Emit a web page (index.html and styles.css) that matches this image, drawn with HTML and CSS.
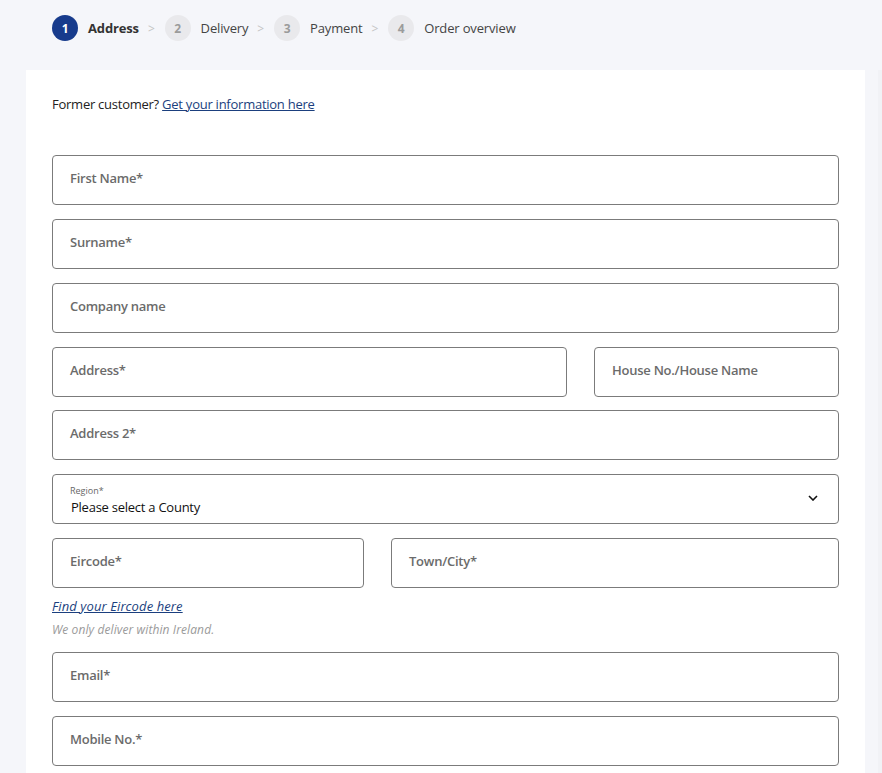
FILE: index.html
```html
<!DOCTYPE html>
<html lang="en">
<head>
    <meta charset="UTF-8">
    <meta name="viewport" content="width=device-width, initial-scale=1.0">
    <title>Checkout - Address</title>
    <link rel="stylesheet" href="styles.css">
</head>
<body>
    <nav class="steps">
        <div class="step active"><span class="num">1</span><span class="label">Address</span></div>
        <span class="sep">&gt;</span>
        <div class="step"><span class="num">2</span><span class="label">Delivery</span></div>
        <span class="sep">&gt;</span>
        <div class="step"><span class="num">3</span><span class="label">Payment</span></div>
        <span class="sep">&gt;</span>
        <div class="step"><span class="num">4</span><span class="label">Order overview</span></div>
    </nav>

    <div class="layout">
        <main class="card">
            <p class="former">Former customer? <a href="#">Get your information here</a></p>

            <form class="fields">
                <div class="field">First Name*</div>
                <div class="field">Surname*</div>
                <div class="field">Company name</div>
                <div class="row row-address">
                    <div class="field">Address*</div>
                    <div class="field">House No./House Name</div>
                </div>
                <div class="field">Address 2*</div>
                <div class="field select">
                    <div class="select-text">
                        <span class="small-label">Region*</span>
                        <span class="value">Please select a County</span>
                    </div>
                    <svg class="chevron" width="10" height="6" viewBox="0 0 10 6"><path d="M1 1l4 4 4-4" fill="none" stroke="#111" stroke-width="1.6"/></svg>
                </div>
                <div class="eircode-group">
                    <div class="row row-eircode">
                        <div class="field">Eircode*</div>
                        <div class="field">Town/City*</div>
                    </div>
                    <a class="eircode-link" href="#">Find your Eircode here</a>
                    <p class="note">We only deliver within Ireland.</p>
                </div>
                <div class="field">Email*</div>
                <div class="field">Mobile No.*</div>
            </form>
        </main>
        <aside class="summary"></aside>
    </div>
</body>
</html>
```

FILE: styles.css
```css
body {
    margin: 0;
    font-family: "Open Sans", Arial, sans-serif;
    font-size: 13px;
    letter-spacing: -0.25px;
    color: #222;
    background-color: #f5f6fa;
    overflow: hidden;
}
.steps {
    display: flex;
    align-items: center;
    height: 56px;
    padding-left: 52px;
    letter-spacing: -0.15px;
}
.step {
    display: flex;
    align-items: center;
    gap: 10px;
}
.num {
    width: 26px;
    height: 26px;
    border-radius: 50%;
    background-color: #e9e9ec;
    color: #9b9b9b;
    font-size: 12px;
    font-weight: 700;
    display: flex;
    align-items: center;
    justify-content: center;
}
.step .label {
    color: #444;
}
.step.active .num {
    background-color: #173b8c;
    color: #fff;
}
.step.active .label {
    font-weight: 700;
    color: #333;
}
.sep {
    color: #c4c4c4;
    margin: 0 10px 0 9px;
    font-size: 12px;
}
.layout {
    display: flex;
    gap: 13px;
    margin-top: 14px;
    padding-left: 26px;
}
.card {
    width: 839px;
    flex-shrink: 0;
    background-color: #fff;
    padding: 25px 26px 40px;
    box-sizing: border-box;
    min-height: 720px;
}
.summary {
    flex: 1;
    background-color: #f1f2f6;
    height: 720px;
}
.former {
    margin: 0 0 42px;
    line-height: 18px;
}
.former a,
.eircode-link {
    color: #1b3f7e;
    text-decoration: underline;
}
.fields {
    display: flex;
    flex-direction: column;
    gap: 14px;
}
.field {
    height: 50px;
    box-sizing: border-box;
    border: 1px solid #7b7b7b;
    border-radius: 4px;
    padding: 0 17px;
    display: flex;
    align-items: center;
    color: #6b6b6b;
    font-weight: 600;
    padding-bottom: 4px;
}
.row {
    display: grid;
    gap: 27px;
}
.row-address {
    grid-template-columns: 1fr 245px;
    margin-bottom: -1px;
}
.row-eircode {
    grid-template-columns: 312px 1fr;
}
.select {
    justify-content: space-between;
    padding: 0 20px 0 17px;
}
.select-text {
    display: flex;
    flex-direction: column;
    padding-top: 4px;
}
.small-label {
    font-size: 9px;
    font-weight: 400;
    color: #666;
    line-height: 12px;
    letter-spacing: 0;
}
.value {
    color: #111;
    font-weight: 400;
    line-height: 20px;
    margin-left: 1px;
}
.chevron {
    margin-bottom: 2px;
}
.eircode-group {
    display: flex;
    flex-direction: column;
}
.eircode-link {
    font-style: italic;
    margin-top: 9px;
    line-height: 18px;
    align-self: flex-start;
    letter-spacing: 0.1px;
}
.note {
    margin: 7px 0 0;
    font-size: 12px;
    font-style: italic;
    color: #9a9a9a;
    line-height: 16px;
    letter-spacing: 0.1px;
}
```
